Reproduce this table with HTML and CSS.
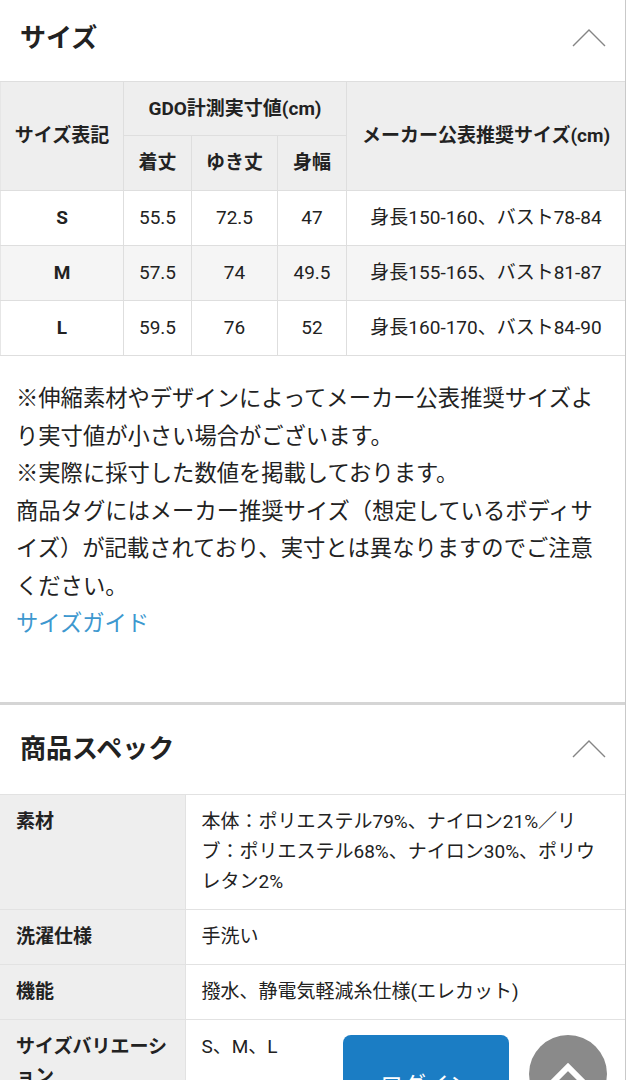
FILE: index.html
```html
<!DOCTYPE html>
<html lang="ja">
<head>
    <meta charset="UTF-8">
    <meta name="viewport" content="width=device-width, initial-scale=1.0">
    <title>サイズ・商品スペック</title>
    <link rel="stylesheet" href="styles.css">
</head>
<body>
    <div class="page">
        <section class="panel">
            <div class="panel-head">
                <h2>サイズ</h2>
                <svg class="chevron" width="34" height="18" viewBox="0 0 34 18"><polyline points="1,17 17,1 33,17" /></svg>
            </div>
            <table class="size-table">
                <colgroup>
                    <col style="width:123px">
                    <col style="width:68px">
                    <col style="width:86px">
                    <col style="width:69px">
                    <col>
                </colgroup>
                <tr class="head-top">
                    <th rowspan="2">サイズ表記</th>
                    <th colspan="3">GDO計測実寸値(cm)</th>
                    <th rowspan="2">メーカー公表推奨サイズ(cm)</th>
                </tr>
                <tr class="head-sub">
                    <th>着丈</th>
                    <th>ゆき丈</th>
                    <th>身幅</th>
                </tr>
                <tr>
                    <td class="size">S</td>
                    <td>55.5</td>
                    <td>72.5</td>
                    <td>47</td>
                    <td>身長150-160、バスト78-84</td>
                </tr>
                <tr class="alt">
                    <td class="size">M</td>
                    <td>57.5</td>
                    <td>74</td>
                    <td>49.5</td>
                    <td>身長155-165、バスト81-87</td>
                </tr>
                <tr>
                    <td class="size">L</td>
                    <td>59.5</td>
                    <td>76</td>
                    <td>52</td>
                    <td>身長160-170、バスト84-90</td>
                </tr>
            </table>
            <div class="notes">
                <p>※伸縮素材やデザインによってメーカー公表推奨サイズより実寸値が小さい場合がございます。</p>
                <p>※実際に採寸した数値を掲載しております。</p>
                <p>商品タグにはメーカー推奨サイズ（想定しているボディサイズ）が記載されており、実寸とは異なりますのでご注意ください。</p>
                <a href="#" class="guide-link">サイズガイド</a>
            </div>
        </section>

        <section class="panel panel-spec">
            <div class="panel-head">
                <h2>商品スペック</h2>
                <svg class="chevron" width="34" height="18" viewBox="0 0 34 18"><polyline points="1,17 17,1 33,17" /></svg>
            </div>
            <table class="spec-table">
                <tr>
                    <th>素材</th>
                    <td>本体：ポリエステル79%、ナイロン21%／リブ：ポリエステル68%、ナイロン30%、ポリウレタン2%</td>
                </tr>
                <tr>
                    <th>洗濯仕様</th>
                    <td>手洗い</td>
                </tr>
                <tr>
                    <th>機能</th>
                    <td>撥水、静電気軽減糸仕様(エレカット)</td>
                </tr>
                <tr>
                    <th>サイズバリエーション</th>
                    <td>S、M、L</td>
                </tr>
            </table>
        </section>
    </div>

    <a href="#" class="login-btn">ログイン</a>
    <a href="#" class="to-top">
        <svg width="78" height="78" viewBox="0 0 78 78"><polyline points="16,55 39,32 62,55" /></svg>
    </a>
</body>
</html>
```

FILE: styles.css
```css
* {
    padding: 0;
    margin: 0;
    box-sizing: border-box;
    font-family: Roboto, "Noto Sans CJK JP", sans-serif;
}
body {
    width: 100%;
    background: #fff;
    color: #222;
}
.page {
    width: 626px;
    min-height: 1080px;
    border-right: 1px solid #c9c9c9;
}
.panel-head {
    height: 81px;
    padding: 0 19px 6px 20px;
    display: flex;
    align-items: center;
    justify-content: space-between;
}
.panel-head h2 {
    font-size: 26px;
    font-weight: bold;
    line-height: 1;
}
.chevron polyline {
    fill: none;
    stroke: #858585;
    stroke-width: 1.4;
}
table {
    width: 100%;
    border-collapse: collapse;
    table-layout: fixed;
}
.size-table th,
.size-table td {
    border: 1px solid #dedede;
    text-align: center;
    font-size: 19px;
    line-height: 24px;
    padding: 0;
}
.size-table tr > :last-child {
    border-right: none;
}
.size-table tr > :first-child {
    border-left-color: #e6e6e6;
}
.size-table th {
    background: #eeeeee;
    font-weight: bold;
}
.head-top th {
    height: 54px;
}
.head-sub th {
    height: 55px;
}
.size-table td {
    height: 55px;
}
.size-table td.size {
    font-weight: bold;
}
.size-table tr.alt td {
    background: #f5f5f5;
}
.notes {
    padding: 24px 16px 59px;
    font-size: 22.3px;
    line-height: 37.5px;
}
.guide-link {
    color: #3d98cf;
    text-decoration: none;
}
.panel-spec {
    border-top: 3px solid #d5d5d5;
}
.panel-spec .panel-head {
    height: 89px;
    padding-bottom: 0;
}
.spec-table th,
.spec-table td {
    border: 1px solid #e2e2e2;
    text-align: left;
    vertical-align: top;
    font-size: 19px;
    line-height: 30px;
    padding: 12px 16px;
}
.spec-table th {
    width: 185px;
    background: #eeeeee;
    font-weight: bold;
    padding-right: 10px;
    border-left: none;
}
.spec-table td {
    font-weight: normal;
    border-right: none;
}
.login-btn {
    position: fixed;
    left: 343px;
    top: 1035px;
    width: 166px;
    height: 96px;
    display: flex;
    align-items: center;
    justify-content: center;
    background: #1b7dc4;
    border-radius: 8px;
    color: #fff;
    font-size: 23px;
    text-decoration: none;
}
.to-top {
    position: fixed;
    left: 529px;
    top: 1035px;
    width: 78px;
    height: 78px;
    border-radius: 50%;
    background: #8a8a8a;
}
.to-top svg {
    display: block;
}
.to-top polyline {
    fill: none;
    stroke: #fff;
    stroke-width: 6;
}
```
